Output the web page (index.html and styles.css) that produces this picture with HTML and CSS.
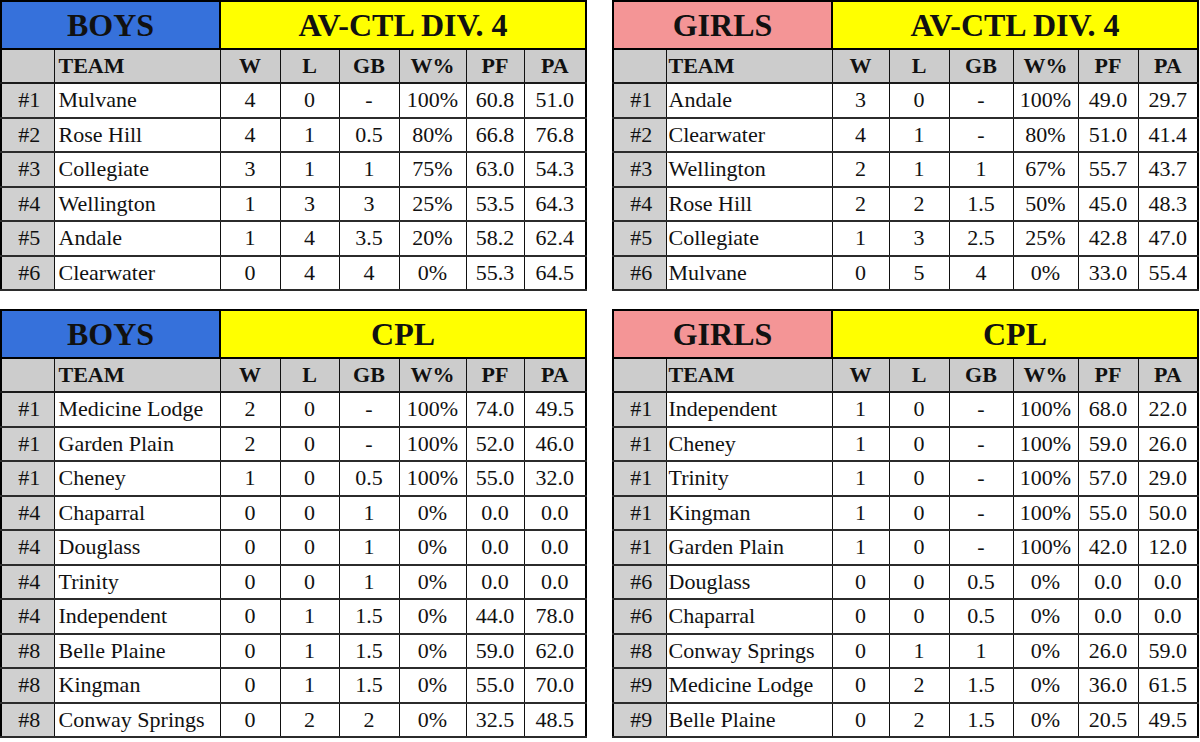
FILE: index.html
```html
<!DOCTYPE html>
<html>
<head>
<meta charset="utf-8">
<link rel="stylesheet" href="styles.css">
</head>
<body>
<div class="page">
  <table class="standings left">
    <colgroup><col class="c-rank"><col class="c-team"><col class="c-w"><col class="c-l"><col class="c-gb"><col class="c-pct"><col class="c-pf"><col class="c-pa"></colgroup>
    <tr class="title"><th colspan="2" class="boys">BOYS</th><th colspan="6" class="league">AV-CTL DIV. 4</th></tr>
    <tr class="heads"><th></th><th class="team">TEAM</th><th>W</th><th>L</th><th>GB</th><th>W%</th><th>PF</th><th>PA</th></tr>
    <tr><td class="rank">#1</td><td class="team">Mulvane</td><td>4</td><td>0</td><td>-</td><td>100%</td><td>60.8</td><td>51.0</td></tr>
    <tr><td class="rank">#2</td><td class="team">Rose Hill</td><td>4</td><td>1</td><td>0.5</td><td>80%</td><td>66.8</td><td>76.8</td></tr>
    <tr><td class="rank">#3</td><td class="team">Collegiate</td><td>3</td><td>1</td><td>1</td><td>75%</td><td>63.0</td><td>54.3</td></tr>
    <tr><td class="rank">#4</td><td class="team">Wellington</td><td>1</td><td>3</td><td>3</td><td>25%</td><td>53.5</td><td>64.3</td></tr>
    <tr><td class="rank">#5</td><td class="team">Andale</td><td>1</td><td>4</td><td>3.5</td><td>20%</td><td>58.2</td><td>62.4</td></tr>
    <tr><td class="rank">#6</td><td class="team">Clearwater</td><td>0</td><td>4</td><td>4</td><td>0%</td><td>55.3</td><td>64.5</td></tr>
  </table>

  <table class="standings right">
    <colgroup><col class="c-rank"><col class="c-team"><col class="c-w"><col class="c-l"><col class="c-gb"><col class="c-pct"><col class="c-pf"><col class="c-pa"></colgroup>
    <tr class="title"><th colspan="2" class="girls">GIRLS</th><th colspan="6" class="league">AV-CTL DIV. 4</th></tr>
    <tr class="heads"><th></th><th class="team">TEAM</th><th>W</th><th>L</th><th>GB</th><th>W%</th><th>PF</th><th>PA</th></tr>
    <tr><td class="rank">#1</td><td class="team">Andale</td><td>3</td><td>0</td><td>-</td><td>100%</td><td>49.0</td><td>29.7</td></tr>
    <tr><td class="rank">#2</td><td class="team">Clearwater</td><td>4</td><td>1</td><td>-</td><td>80%</td><td>51.0</td><td>41.4</td></tr>
    <tr><td class="rank">#3</td><td class="team">Wellington</td><td>2</td><td>1</td><td>1</td><td>67%</td><td>55.7</td><td>43.7</td></tr>
    <tr><td class="rank">#4</td><td class="team">Rose Hill</td><td>2</td><td>2</td><td>1.5</td><td>50%</td><td>45.0</td><td>48.3</td></tr>
    <tr><td class="rank">#5</td><td class="team">Collegiate</td><td>1</td><td>3</td><td>2.5</td><td>25%</td><td>42.8</td><td>47.0</td></tr>
    <tr><td class="rank">#6</td><td class="team">Mulvane</td><td>0</td><td>5</td><td>4</td><td>0%</td><td>33.0</td><td>55.4</td></tr>
  </table>

  <table class="standings left">
    <colgroup><col class="c-rank"><col class="c-team"><col class="c-w"><col class="c-l"><col class="c-gb"><col class="c-pct"><col class="c-pf"><col class="c-pa"></colgroup>
    <tr class="title"><th colspan="2" class="boys">BOYS</th><th colspan="6" class="league">CPL</th></tr>
    <tr class="heads"><th></th><th class="team">TEAM</th><th>W</th><th>L</th><th>GB</th><th>W%</th><th>PF</th><th>PA</th></tr>
    <tr><td class="rank">#1</td><td class="team">Medicine Lodge</td><td>2</td><td>0</td><td>-</td><td>100%</td><td>74.0</td><td>49.5</td></tr>
    <tr><td class="rank">#1</td><td class="team">Garden Plain</td><td>2</td><td>0</td><td>-</td><td>100%</td><td>52.0</td><td>46.0</td></tr>
    <tr><td class="rank">#1</td><td class="team">Cheney</td><td>1</td><td>0</td><td>0.5</td><td>100%</td><td>55.0</td><td>32.0</td></tr>
    <tr><td class="rank">#4</td><td class="team">Chaparral</td><td>0</td><td>0</td><td>1</td><td>0%</td><td>0.0</td><td>0.0</td></tr>
    <tr><td class="rank">#4</td><td class="team">Douglass</td><td>0</td><td>0</td><td>1</td><td>0%</td><td>0.0</td><td>0.0</td></tr>
    <tr><td class="rank">#4</td><td class="team">Trinity</td><td>0</td><td>0</td><td>1</td><td>0%</td><td>0.0</td><td>0.0</td></tr>
    <tr><td class="rank">#4</td><td class="team">Independent</td><td>0</td><td>1</td><td>1.5</td><td>0%</td><td>44.0</td><td>78.0</td></tr>
    <tr><td class="rank">#8</td><td class="team">Belle Plaine</td><td>0</td><td>1</td><td>1.5</td><td>0%</td><td>59.0</td><td>62.0</td></tr>
    <tr><td class="rank">#8</td><td class="team">Kingman</td><td>0</td><td>1</td><td>1.5</td><td>0%</td><td>55.0</td><td>70.0</td></tr>
    <tr><td class="rank">#8</td><td class="team">Conway Springs</td><td>0</td><td>2</td><td>2</td><td>0%</td><td>32.5</td><td>48.5</td></tr>
  </table>

  <table class="standings right">
    <colgroup><col class="c-rank"><col class="c-team"><col class="c-w"><col class="c-l"><col class="c-gb"><col class="c-pct"><col class="c-pf"><col class="c-pa"></colgroup>
    <tr class="title"><th colspan="2" class="girls">GIRLS</th><th colspan="6" class="league">CPL</th></tr>
    <tr class="heads"><th></th><th class="team">TEAM</th><th>W</th><th>L</th><th>GB</th><th>W%</th><th>PF</th><th>PA</th></tr>
    <tr><td class="rank">#1</td><td class="team">Independent</td><td>1</td><td>0</td><td>-</td><td>100%</td><td>68.0</td><td>22.0</td></tr>
    <tr><td class="rank">#1</td><td class="team">Cheney</td><td>1</td><td>0</td><td>-</td><td>100%</td><td>59.0</td><td>26.0</td></tr>
    <tr><td class="rank">#1</td><td class="team">Trinity</td><td>1</td><td>0</td><td>-</td><td>100%</td><td>57.0</td><td>29.0</td></tr>
    <tr><td class="rank">#1</td><td class="team">Kingman</td><td>1</td><td>0</td><td>-</td><td>100%</td><td>55.0</td><td>50.0</td></tr>
    <tr><td class="rank">#1</td><td class="team">Garden Plain</td><td>1</td><td>0</td><td>-</td><td>100%</td><td>42.0</td><td>12.0</td></tr>
    <tr><td class="rank">#6</td><td class="team">Douglass</td><td>0</td><td>0</td><td>0.5</td><td>0%</td><td>0.0</td><td>0.0</td></tr>
    <tr><td class="rank">#6</td><td class="team">Chaparral</td><td>0</td><td>0</td><td>0.5</td><td>0%</td><td>0.0</td><td>0.0</td></tr>
    <tr><td class="rank">#8</td><td class="team">Conway Springs</td><td>0</td><td>1</td><td>1</td><td>0%</td><td>26.0</td><td>59.0</td></tr>
    <tr><td class="rank">#9</td><td class="team">Medicine Lodge</td><td>0</td><td>2</td><td>1.5</td><td>0%</td><td>36.0</td><td>61.5</td></tr>
    <tr><td class="rank">#9</td><td class="team">Belle Plaine</td><td>0</td><td>2</td><td>1.5</td><td>0%</td><td>20.5</td><td>49.5</td></tr>
  </table>
</div>
</body>
</html>
```

FILE: styles.css
```css
html, body {
  margin: 0;
  padding: 0;
  background: #ffffff;
}

body {
  font-family: "Liberation Serif", "Times New Roman", serif;
  color: #111;
  width: 1200px;
  height: 742px;
  overflow: hidden;
}

.page {
  display: grid;
  grid-template-columns: 585px 585px;
  column-gap: 27px;
  row-gap: 18px;
  align-items: start;
}

.standings {
  border-collapse: collapse;
  table-layout: fixed;
  width: 585px;
  border: 2px solid #000;
}

.standings .c-rank { width: 53px; }
.standings .c-team { width: 166px; }
.left .c-w { width: 60px; }
.left .c-l { width: 59px; }
.left .c-gb { width: 60px; }
.left .c-pct { width: 67px; }
.left .c-pf { width: 58px; }
.left .c-pa { width: 62px; }
.right .c-w { width: 57px; }
.right .c-l { width: 60px; }
.right .c-gb { width: 64px; }
.right .c-pct { width: 65px; }
.right .c-pf { width: 60px; }
.right .c-pa { width: 60px; }

.standings th,
.standings td {
  border-left: 1px solid #111;
  border-right: 1px solid #111;
  border-top: 2px solid #2b2b2b;
  border-bottom: 2px solid #2b2b2b;
  padding: 0;
  text-align: center;
  vertical-align: middle;
  white-space: nowrap;
  overflow: hidden;
}

.title th {
  height: 46px;
  font-size: 32px;
  font-weight: bold;
  border: 2px solid #000;
}

.title .boys { background: #3671db; }
.title .girls { background: #f49596; }
.title .league { background: #ffff00; }

.heads th {
  height: 32px;
  background: #cccccc;
  font-size: 22px;
  font-weight: bold;
  border-bottom: 2px solid #1a1a1a;
}

.heads th.team {
  text-align: left;
  padding-left: 4px;
}

.standings td {
  height: 32.5px;
  font-size: 22px;
  background: #ffffff;
}

.standings td.rank {
  background: #d0d0d0;
  padding-left: 3px;
}

.standings td.team {
  text-align: left;
  padding-left: 4px;
}

.right td.team,
.right .heads th.team {
  padding-left: 2px;
}
```
